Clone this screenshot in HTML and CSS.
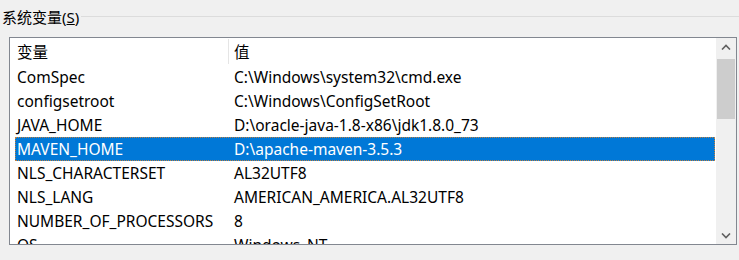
FILE: index.html
```html
<!DOCTYPE html>
<html lang="zh-CN">
<head>
  <meta charset="UTF-8">
  <title>系统变量</title>
  <link rel="stylesheet" href="styles.css">
</head>
<body>
  <div class="grupa">
    <div class="titlu-grupa"><span>系统变量(<u>S</u>)</span><div class="linie"></div></div>
    <div class="lista">
      <div class="continut">
        <div class="rand antet">
          <div class="col1">变量</div>
          <div class="col2">值</div>
        </div>
        <div class="rand"><div class="col1">ComSpec</div><div class="col2">C:\Windows\system32\cmd.exe</div></div>
        <div class="rand"><div class="col1">configsetroot</div><div class="col2">C:\Windows\ConfigSetRoot</div></div>
        <div class="rand"><div class="col1">JAVA_HOME</div><div class="col2">D:\oracle-java-1.8-x86\jdk1.8.0_73</div></div>
        <div class="rand selectat"><div class="col1">MAVEN_HOME</div><div class="col2">D:\apache-maven-3.5.3</div></div>
        <div class="rand"><div class="col1">NLS_CHARACTERSET</div><div class="col2">AL32UTF8</div></div>
        <div class="rand"><div class="col1">NLS_LANG</div><div class="col2">AMERICAN_AMERICA.AL32UTF8</div></div>
        <div class="rand"><div class="col1">NUMBER_OF_PROCESSORS</div><div class="col2">8</div></div>
        <div class="rand"><div class="col1">OS</div><div class="col2">Windows_NT</div></div>
      </div>
      <div class="scroll">
        <div class="sageata">
          <svg width="10" height="6" viewBox="0 0 10 6"><path d="M1 5.5 L5 1.5 L9 5.5" fill="none" stroke="#606060" stroke-width="1.6"/></svg>
        </div>
        <div class="pista"><div class="cursor"></div></div>
        <div class="sageata">
          <svg width="10" height="6" viewBox="0 0 10 6"><path d="M1 0.5 L5 4.5 L9 0.5" fill="none" stroke="#606060" stroke-width="1.6"/></svg>
        </div>
      </div>
    </div>
  </div>
</body>
</html>
```

FILE: styles.css
```css
body {
  margin: 0;
  background-color: #f0f0f0;
  font-family: 'Noto Sans', 'Noto Sans CJK SC', sans-serif;
  font-size: 15.5px;
  color: #000;
  overflow: hidden;
}
.grupa {
  padding: 4px 0 0 2px;
}
.titlu-grupa {
  display: flex;
  align-items: center;
  height: 24px;
  font-size: 15px;
}
.titlu-grupa span {
  margin-right: 2px;
}
.linie {
  flex: 1;
  height: 1px;
  background: #dcdcdc;
}
.lista {
  margin: 9px 0 0 7px;
  width: 726px;
  height: 206px;
  border: 1px solid #828790;
  background: white;
  display: flex;
  overflow: hidden;
}
.continut {
  flex: 1;
  padding-left: 5px;
  overflow: hidden;
}
.rand {
  display: flex;
  height: 24px;
  align-items: center;
  white-space: nowrap;
  margin-right: 1px;
}
.antet {
  height: 27px;
}
.col1 {
  width: 211px;
  padding-left: 2px;
  flex-shrink: 0;
  height: 100%;
  display: flex;
  align-items: center;
}
.col2 {
  padding-left: 6px;
  height: 100%;
  display: flex;
  align-items: center;
}
.antet .col2 {
  border-left: 1px solid #e5e5e5;
  height: 25px;
  padding-left: 5px;
}
.selectat {
  background-color: #0078d7;
  color: white;
  outline: 1px dotted #c08040;
  outline-offset: -1px;
}
.scroll {
  width: 20px;
  background: #f0f0f0;
  display: flex;
  flex-direction: column;
}
.sageata {
  height: 17px;
  display: flex;
  align-items: center;
  justify-content: center;
}
.pista {
  flex: 1;
  padding-top: 4px;
}
.cursor {
  margin: 0 1px;
  height: 60px;
  background: #cdcdcd;
}
```
